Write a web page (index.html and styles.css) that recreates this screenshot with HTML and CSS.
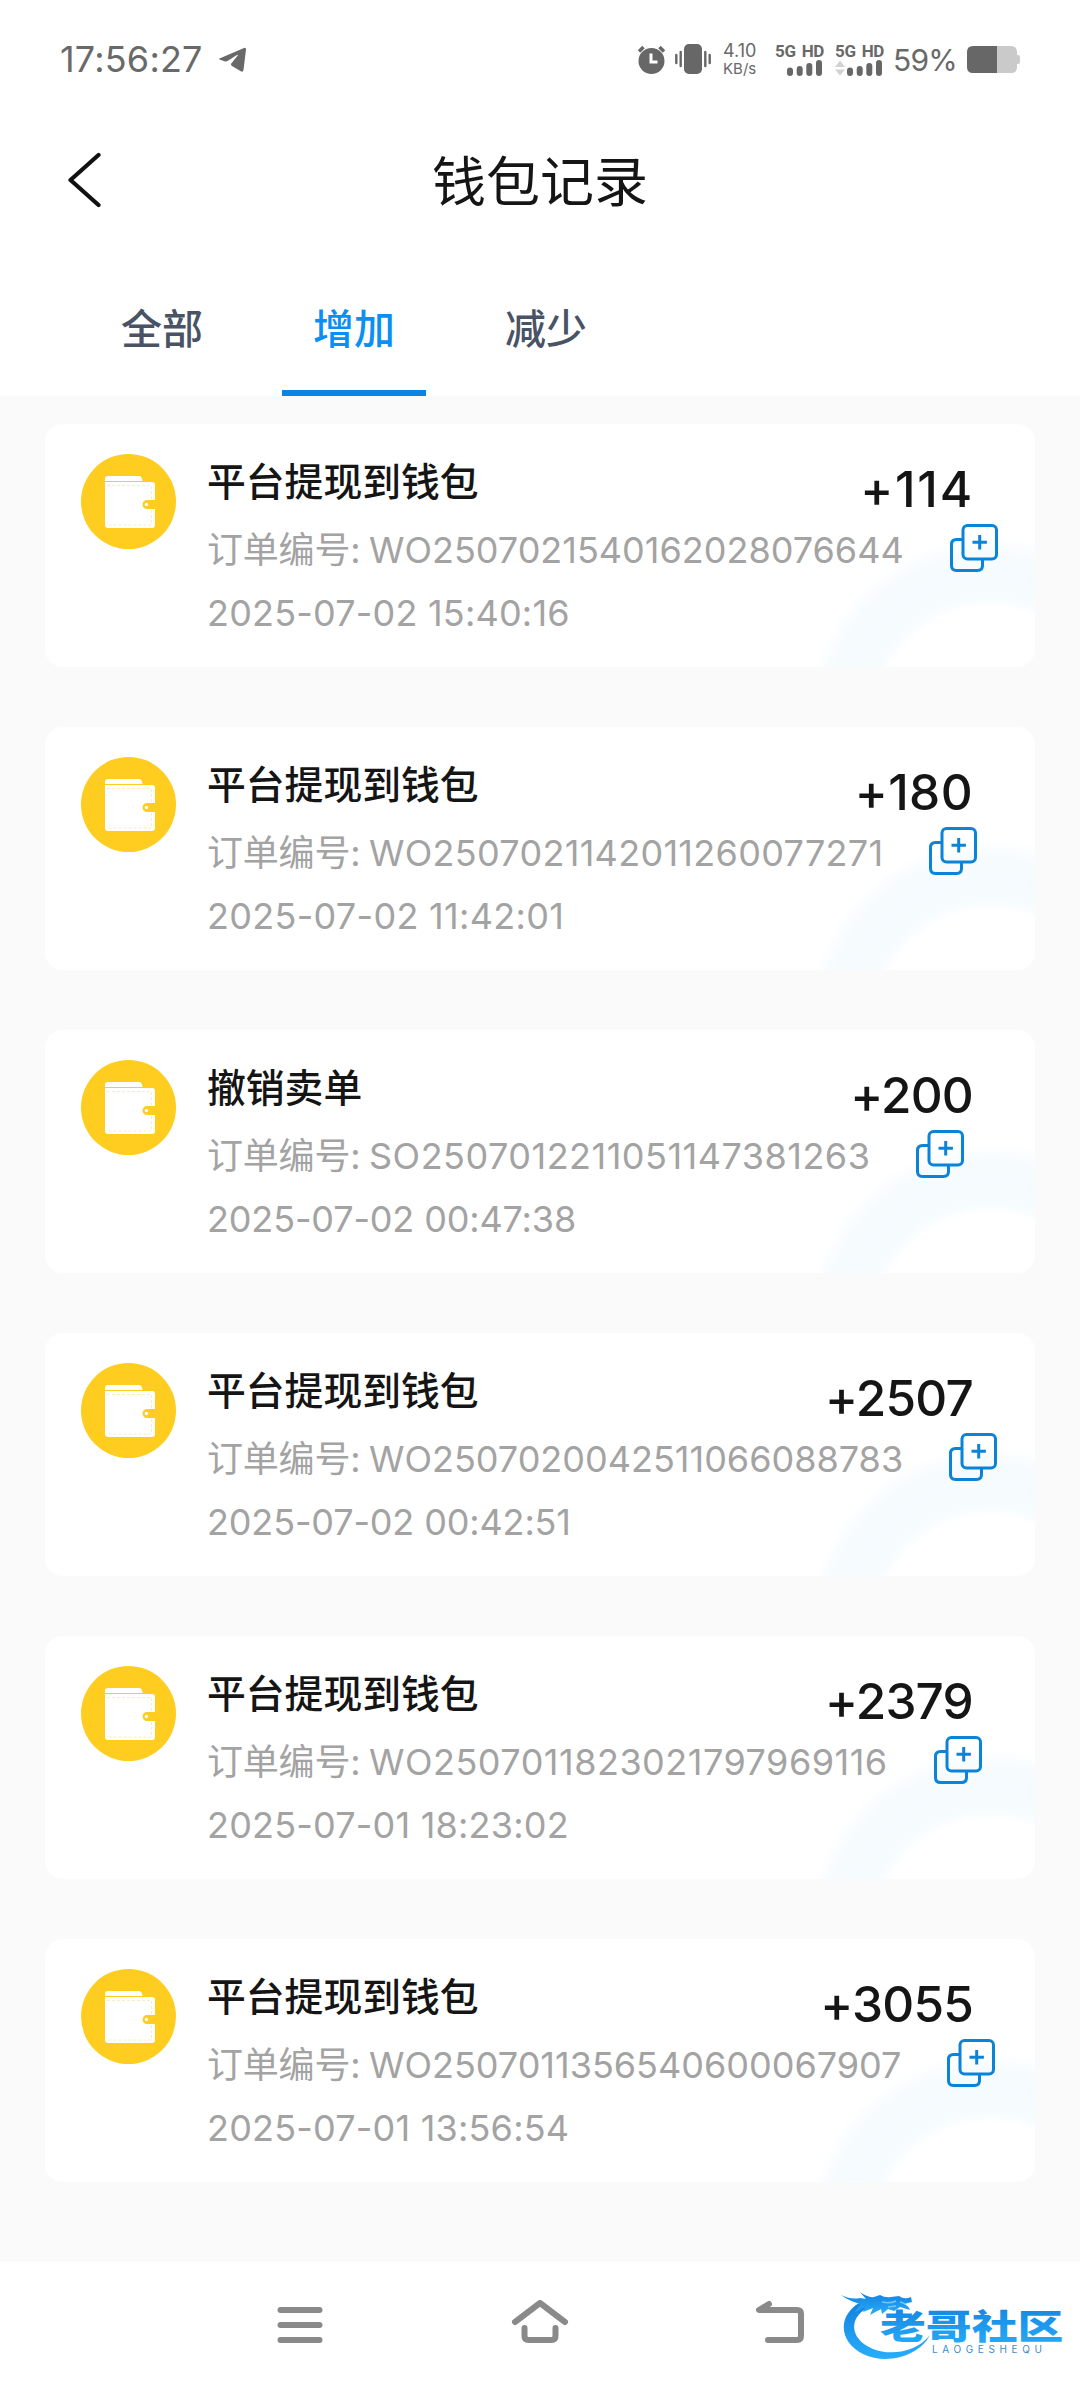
FILE: index.html
```html
<!DOCTYPE html>
<html lang="zh-CN">
<head>
<meta charset="utf-8">
<title>钱包记录</title>
<link rel="stylesheet" href="styles.css">
</head>
<body>
<svg class="defs" width="0" height="0" aria-hidden="true">
  <symbol id="wallet" viewBox="0 0 95 95">
    <circle cx="47.5" cy="47.5" r="47.5" fill="#fecd1f"/>
    <path d="M24 27v-2q0-3 3-3h31q3 0 3.500 5z" fill="#fff"/>
    <path d="M24 28h47q3 0 3 3v15h-8a4.500 4.500 0 0 0 0 9h8v16q0 3-3 3H27q-3 0-3-3z" fill="#fff"/>
    <path d="M26 31.500h44.500V45M70.500 56v15H26" fill="none" stroke="#fbe9ae" stroke-width=".8" stroke-dasharray="3 2"/>
    <circle cx="65.500" cy="50.500" r="1.700" fill="#fff"/>
  </symbol>
  <symbol id="copy" viewBox="0 0 48 48">
    <g fill="none" stroke="#0b84d8" stroke-width="3">
      <path d="M12 15.500H6.500q-5 0-5 5V41.500q0 5 5 5H27.500q5 0 5-5V36"/>
      <rect x="13" y="1.500" width="33.500" height="33.500" rx="4.500"/>
      <path d="M22.500 18.200h14.400M29.700 11v14.400"/>
    </g>
  </symbol>
</svg>

<header class="top">
  <div class="status">
    <span class="clock">17:56:27</span>
    <svg class="plane" width="29" height="26" viewBox="0 0 29 26"><path d="M1.500 11.500 26 1q2.200-.6 2 1.500L25.500 23q-.5 2.500-2.700 1.300L14 19q-2-1.300-.3-3l6-7.500q.6-1.200-.8-.6L9.500 14q-1.500.8-3 .2l-5-1.600q-1-.5 0-1.100z" fill="#696969"/></svg>
    <div class="indicators">
      <svg width="29" height="29" viewBox="0 0 29 29"><circle cx="14.500" cy="16" r="13" fill="#676767"/><path d="M2 6.500 6.500 2M27 6.500 22.500 2" stroke="#676767" stroke-width="3.500"/><path d="M14 8.500v8.500h6.500" fill="none" stroke="#fff" stroke-width="3"/></svg>
      <svg class="vibrate" width="36" height="30" viewBox="0 0 36 30"><rect x="9" width="18" height="30" rx="5" fill="#676767"/><path d="M1.300 11v8M5.700 8v14M30.300 8v14M34.700 11v8" stroke="#676767" stroke-width="2.400" stroke-linecap="round"/></svg>
      <div class="speed"><span>4.10</span><span class="unit">KB/s</span></div>
      <div class="network"><span>5G HD</span><svg width="47" height="16" viewBox="0 0 47 16"><path d="M15 10.500v2.500M24.700 9v4M34.300 6v7M44 3v10" stroke="#676767" stroke-width="6" stroke-linecap="round"/></svg></div>
      <div class="network"><span>5G HD</span><svg width="47" height="16" viewBox="0 0 47 16"><path d="m0 7 5-6.500L10 7zM0 9.500h10L5 15.500z" fill="#d2d2d2"/><path d="M15 10.500v2.500M24.700 9v4M34.300 6v7M44 3v10" stroke="#676767" stroke-width="6" stroke-linecap="round"/></svg></div>
      <span class="percent">59%</span>
      <svg width="53" height="27" viewBox="0 0 53 27"><path d="M30 0h14q6 0 6 6v3h1q2 0 2 2v5q0 2-2 2h-1v3q0 6-6 6H30z" fill="#cacaca"/><path d="M30 0H6Q0 0 0 6v15q0 6 6 6h24z" fill="#676767"/></svg>
    </div>
  </div>
  <div class="title-bar">
    <svg class="back" width="34" height="56" viewBox="0 0 34 56"><path d="M31.500 3 3.500 28l28 25" fill="none" stroke="#111" stroke-width="4.200" stroke-linecap="round" stroke-linejoin="round"/></svg>
    <h1>钱包记录</h1>
  </div>
  <nav class="tabs">
    <a class="tab">全部</a>
    <a class="tab active">增加</a>
    <a class="tab">减少</a>
  </nav>
</header>

<main class="records">
  <article class="card">
    <svg class="wallet"><use href="#wallet"/></svg>
    <div class="info">
      <div class="head"><h2>平台提现到钱包</h2><strong class="one">+114</strong></div>
      <div class="order"><span class="label">订单编号: </span><span>WO2507021540162028076644</span><svg class="copy"><use href="#copy"/></svg></div>
      <time>2025-07-02 15:40:16</time>
    </div>
  </article>
  <article class="card">
    <svg class="wallet"><use href="#wallet"/></svg>
    <div class="info">
      <div class="head"><h2>平台提现到钱包</h2><strong class="mid">+180</strong></div>
      <div class="order"><span class="label">订单编号: </span><span class="open">WO2507021142011260077271</span><svg class="copy"><use href="#copy"/></svg></div>
      <time class="even">2025-07-02 11:42:01</time>
    </div>
  </article>
  <article class="card">
    <svg class="wallet"><use href="#wallet"/></svg>
    <div class="info">
      <div class="head"><h2>撤销卖单</h2><strong>+200</strong></div>
      <div class="order"><span class="label">订单编号: </span><span class="wide">SO2507012211051147381263</span><svg class="copy"><use href="#copy"/></svg></div>
      <time class="tight">2025-07-02 00:47:38</time>
    </div>
  </article>
  <article class="card">
    <svg class="wallet"><use href="#wallet"/></svg>
    <div class="info">
      <div class="head"><h2>平台提现到钱包</h2><strong>+2507</strong></div>
      <div class="order"><span class="label">订单编号: </span><span>WO2507020042511066088783</span><svg class="copy"><use href="#copy"/></svg></div>
      <time class="tight">2025-07-02 00:42:51</time>
    </div>
  </article>
  <article class="card">
    <svg class="wallet"><use href="#wallet"/></svg>
    <div class="info">
      <div class="head"><h2>平台提现到钱包</h2><strong>+2379</strong></div>
      <div class="order"><span class="label">订单编号: </span><span class="wide">WO2507011823021797969116</span><svg class="copy"><use href="#copy"/></svg></div>
      <time>2025-07-01 18:23:02</time>
    </div>
  </article>
  <article class="card">
    <svg class="wallet"><use href="#wallet"/></svg>
    <div class="info">
      <div class="head"><h2>平台提现到钱包</h2><strong>+3055</strong></div>
      <div class="order"><span class="label">订单编号: </span><span>WO2507011356540600067907</span><svg class="copy"><use href="#copy"/></svg></div>
      <time>2025-07-01 13:56:54</time>
    </div>
  </article>
</main>

<footer class="system-nav">
  <svg width="60" height="50" viewBox="0 0 60 50"><path d="M10.500 10h39M10.500 25h39M10.500 40h39" stroke="#8a8a8a" stroke-width="6" stroke-linecap="round"/></svg>
  <svg width="60" height="50" viewBox="0 0 60 50"><path d="M5 22 30 3l25 19M14.500 28v8q0 4 4 4h23q4 0 4-4v-8" fill="none" stroke="#8a8a8a" stroke-width="6" stroke-linecap="round" stroke-linejoin="round"/></svg>
  <svg width="60" height="50" viewBox="0 0 60 50"><path d="M19 4 9 10H47q4 0 4 4V36q0 4-4 4H18" fill="none" stroke="#8a8a8a" stroke-width="6" stroke-linecap="round" stroke-linejoin="round"/></svg>
  <svg class="brand" width="226" height="78" viewBox="0 0 226 78">
    <defs>
      <linearGradient id="blue" x1="0" y1="0" x2="0" y2="1"><stop offset="0" stop-color="#1380de"/><stop offset="1" stop-color="#27aefa"/></linearGradient>
    </defs>
    <path d="M25 12C-3 24-3 53 23 66C48 78 80 67 90 47C79 62 53 69 33 61C8 51 8 27 32 18z" fill="url(#blue)"/>
    <path d="M1 7q10 5 19 3l6 1-6-7q8 6 14 5l6-2q5 3 11 2l8-1q5 4 12 1l1 5-8 2q5 2 6 6l-10-3-6 4-6-2-6 5-1-5-11 6 3-7-10 4 2-5-10 5 5-8Q9 13 1 7z" fill="url(#blue)"/>
    <path d="M42 14q8 2 14-1M48 19l8-1M60 14l6 2" stroke="#73c6fa" stroke-width="1.500" fill="none"/>
    <text class="brand-name" x="30" y="51" transform="scale(1.330 1)" fill="url(#blue)">老哥社区</text>
    <text class="brand-sub" x="92" y="65" textLength="110">LAOGESHEQU</text>
  </svg>
</footer>
</body>
</html>
```
FILE: styles.css
```css
* { box-sizing: border-box; }

body {
  margin: 0;
  width: 1080px;
  height: 2388px;
  display: flex;
  flex-direction: column;
  background: #fafafa;
  color: #151515;
  font-family: Inter, "Noto Sans CJK SC", sans-serif;
  overflow: hidden;
}

svg { display: block; flex: none; }
.defs { position: absolute; }
h1, h2 { margin: 0; }

.top { height: 396px; background: #fff; }

.status {
  display: flex;
  align-items: center;
  height: 118px;
  padding: 0 60px 0 60px;
  color: #696969;
}
.clock { font-size: 36px; width: 145px; letter-spacing: .2px; white-space: nowrap; }
.plane { margin-left: 13px; margin-top: 2px; }
.indicators { display: flex; align-items: center; margin-left: auto; }
.vibrate { margin-left: 9px; }
.speed {
  width: 38px;
  margin-left: 12px;
  margin-top: 2px;
  display: flex;
  flex-direction: column;
  font-size: 18px;
  line-height: 18px;
}
.unit { font-size: 15px; }
.network {
  width: 47px;
  margin-left: 14px;
  font: bold 17px/18px Roboto, sans-serif;
  word-spacing: 2px;
  letter-spacing: -.3px;
  white-space: nowrap;
}
.network + .network { margin-left: 13px; }
.percent { width: 62px; margin: 1px 12px 0 11px; font-size: 30px; letter-spacing: -.8px; white-space: nowrap; }

.title-bar {
  display: flex;
  align-items: center;
  height: 124px;
  padding: 0 67px;
}
.title-bar h1 {
  flex: 1;
  margin-right: 34px;
  padding-top: 5px;
  text-align: center;
  font-size: 54px;
  font-weight: 400;
  line-height: 80px;
}

.tabs { display: flex; gap: 48px; height: 154px; padding-left: 90px; }
.tab {
  width: 144px;
  padding-top: 57px;
  text-align: center;
  font-size: 41px;
  font-weight: 500;
  line-height: 60px;
  color: #495365;
}
.active { color: #0a90f5; border-bottom: 6px solid #0b84e4; }

.records {
  flex: 1;
  display: flex;
  flex-direction: column;
  gap: 60px;
  padding: 28px 45px 0;
}
.card {
  display: flex;
  height: 243px;
  padding: 24px 36px;
  border-radius: 18px;
  background: radial-gradient(circle at 945px 296px, #fff 112px, #f7fcfe 122px, #f5fbfe 145px, #f6fbfe 164px, #fff 184px);
}
.wallet { width: 95px; height: 95px; margin-top: 6px; }
.info { flex: 1; min-width: 0; padding-left: 31px; }
.head { display: flex; justify-content: space-between; height: 71px; }
.head h2 { font-size: 38.800px; font-weight: 500; line-height: 68px; }
.head strong {
  margin-right: 26px;
  font-size: 49.500px;
  font-weight: 500;
  line-height: 82px;
  letter-spacing: -.800px;
}
.head .one { margin-right: 25px; letter-spacing: 1.800px; }
.head .mid { letter-spacing: .400px; }
.order, time { color: #a3a3a3; font-size: 36px; line-height: 63px; }
.order { display: flex; align-items: center; height: 63px; white-space: nowrap; }
.label { width: 162px; white-space: pre; letter-spacing: -.2px; }
.copy { width: 48px; height: 48px; margin-left: 46px; margin-top: -6px; }
.open { letter-spacing: .3px; }
.wide { letter-spacing: .5px; }
time { display: block; letter-spacing: .2px; }
.even { letter-spacing: .3px; }
.tight { letter-spacing: -.15px; }

.system-nav {
  display: flex;
  align-items: center;
  gap: 180px;
  height: 126px;
  padding-left: 270px;
  background: #fff;
}
.brand { margin-left: -150px; margin-top: 4px; }
.brand-name { font: 900 34.500px "Noto Sans CJK SC", sans-serif; }
.brand-sub { font: 10px Inter, sans-serif; fill: #3c8dcc; }
```
